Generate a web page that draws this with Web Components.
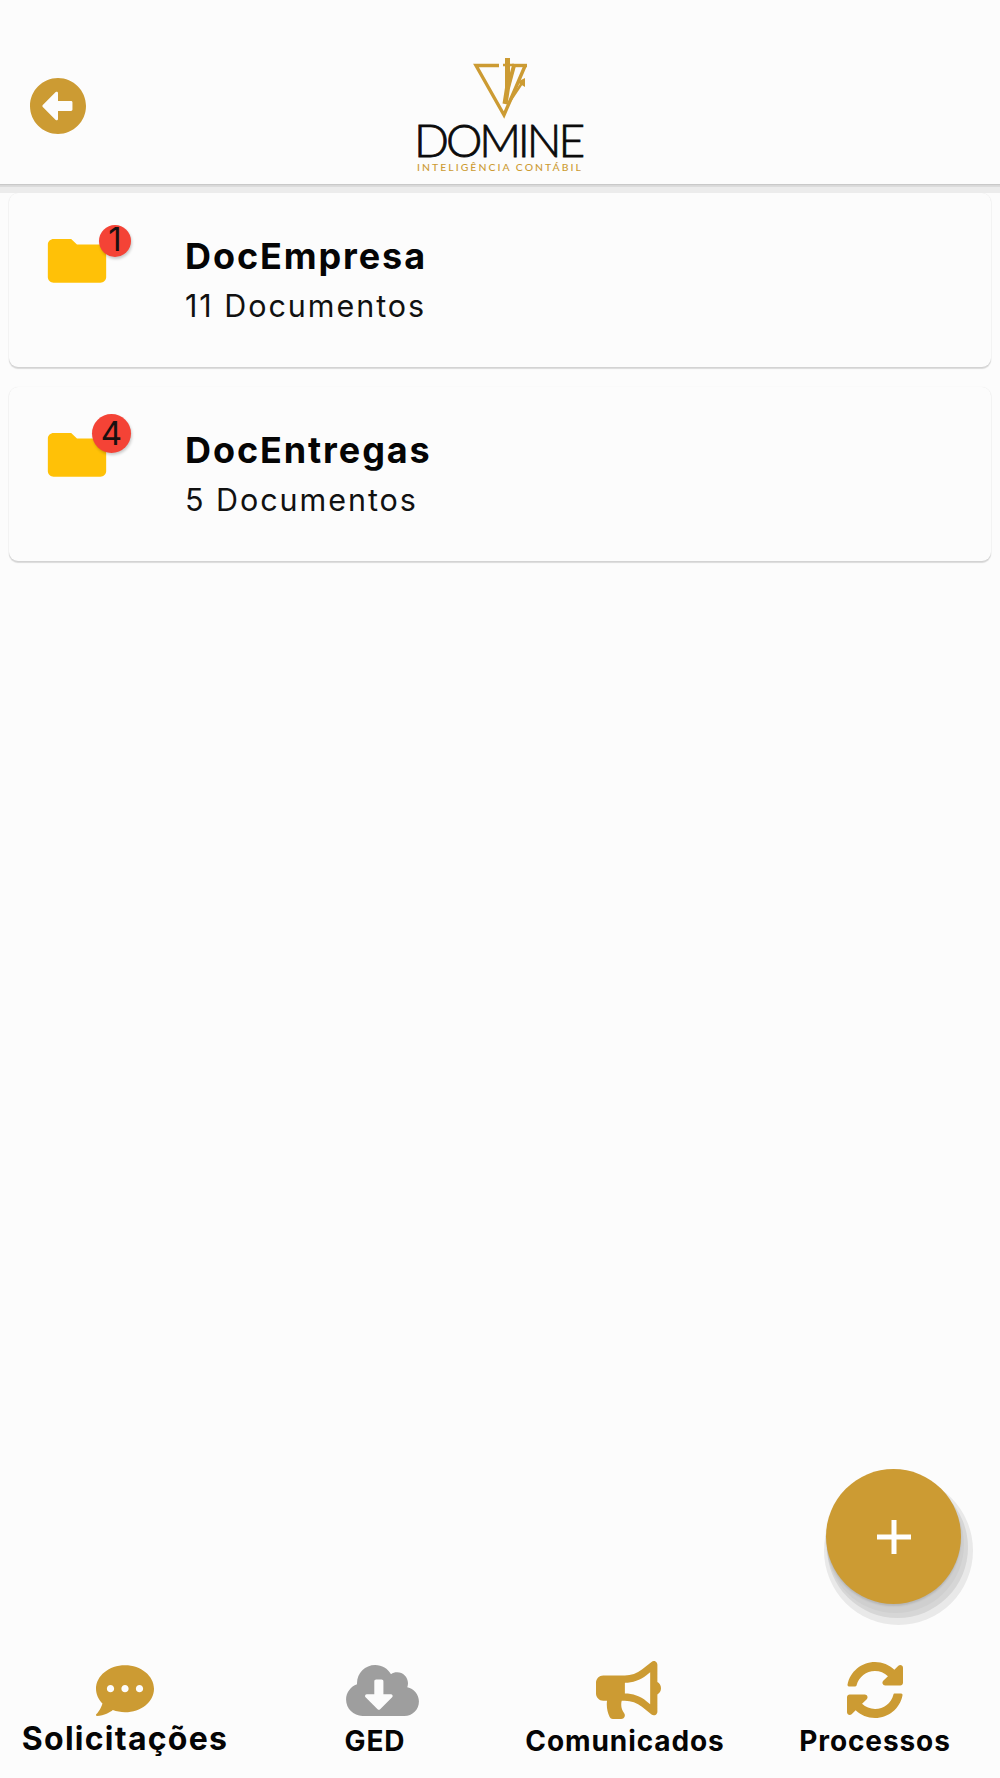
<!DOCTYPE html>
<html lang="pt"><head><meta charset="utf-8"><title>Domine</title>
<style>
html,body{margin:0;padding:0;background:#fcfcfc}
body{font-family:Inter,"Liberation Sans",sans-serif}
app-shell{display:flex;flex-direction:column;width:1000px;height:1778px;overflow:hidden}
</style></head><body>
<app-shell>
  <app-header slot="header"></app-header>
  <folder-card name="DocEmpresa" sub="11 Documentos" count="1"></folder-card>
  <folder-card name="DocEntregas" sub="5 Documentos" count="4" big></folder-card>
  <add-fab slot="fab"></add-fab>
  <nav-bar slot="nav">
    <nav-item label="Solicitações" icon="chat" active></nav-item>
    <nav-item label="GED" icon="cloud" muted dx="14"></nav-item>
    <nav-item label="Comunicados" icon="horn" dx="7"></nav-item>
    <nav-item label="Processos" icon="sync"></nav-item>
  </nav-bar>
</app-shell>
<script>
const GOLD='#cc9b33';
function def(name,html,init){customElements.define(name,class extends HTMLElement{
  constructor(){super();this.attachShadow({mode:'open'});}
  connectedCallback(){this.shadowRoot.innerHTML=typeof html==='function'?html(this):html;}
});}
def('app-shell',`<style>:host{display:flex;flex-direction:column;width:1000px;height:1778px;overflow:hidden;background:#fcfcfc;position:relative}
.list{flex:1;display:flex;flex-direction:column;gap:20px;padding:9px 9px 0}
.fabrow{display:flex;justify-content:flex-end;padding:0 39px 57px 0}</style>
<slot name="header"></slot>
<div class="list"><slot></slot></div>
<div class="fabrow"><slot name="fab"></slot></div>
<slot name="nav"></slot>`);
def('app-header',`<style>:host{display:block;height:184px;flex:none;background:#fcfcfc;position:relative;box-shadow:0 1px 1px #c9c9c9,0 3px 0 #dcdcdc,0 9px 0 #ececec;z-index:1}
.bar{height:100%;display:flex;align-items:flex-start;position:relative;justify-content:center}
.back{position:absolute;left:30px;top:78px;width:56px;height:56px;fill:${GOLD};display:block}
.logo{display:flex;flex-direction:column;align-items:center;padding-top:58px}
.mark{display:block;width:70px;height:62px}
.dom{font:300 46px/38px Lato,"Liberation Sans",sans-serif;color:#0b0b0b;letter-spacing:-3.1px;margin:1px 4px 0 0;-webkit-text-stroke:.8px #0b0b0b}
.tag{font:500 10.4px/13px Lato,"Liberation Sans",sans-serif;color:${GOLD};letter-spacing:2.05px;white-space:nowrap;margin-top:2px}
</style>
<div class="bar">
<svg class="back" viewBox="8 8 496 496"><path d="M256 504C119 504 8 393 8 256S119 8 256 8s248 111 248 248-111 248-248 248zm116-292H256v-70.9c0-10.7-13-16.1-20.5-8.5L121.2 247.5c-4.7 4.7-4.7 12.2 0 16.9l114.3 114.9c7.6 7.6 20.5 2.2 20.5-8.5V300h116c6.6 0 12-5.4 12-12v-64c0-6.6-5.4-12-12-12z"/></svg>
<div class="logo">
<svg class="mark" viewBox="465 58 70 62" fill="none" stroke="${GOLD}" stroke-width="3.4">
<path d="M499 65.5H476L504 115L525 66"/><path d="M512 65.5H527"/>
<path d="M507.5 58V88L505 104" stroke-width="5"/><path d="M503 65H514" stroke-width="2.5"/>
<path d="M514 65.5L508 88" stroke-width="4"/>
<path d="M508 104L522 83" stroke-width="2.6"/><path d="M517 82L525 78L525 87Z" fill="${GOLD}" stroke="none"/>
</svg>
<div class="dom">DOMINE</div>
<div class="tag">INTELIGÊNCIA CONTÁBIL</div>
</div></div>`);
def('folder-card',h=>{const big=h.hasAttribute('big');return `<style>:host{display:block;flex:none}
.card{height:174px;box-sizing:border-box;background:#fcfcfc;border-radius:9px;box-shadow:0 1px 1px #d2d2d2,0 2px 1px #dcdcdc,0 0 1px #e4e4e4;display:flex;align-items:flex-start;padding:34px 0 0 33px}
.ico{position:relative;width:70px;height:70px;flex:none;margin-right:73px}
svg{display:block;width:70px;height:65.6px;margin-top:1px;fill:#FFC107}
.badge{position:absolute;box-sizing:border-box;border-radius:50%;background:#F44336;box-shadow:1px 2px 3px rgba(0,0,0,.2);display:flex;align-items:center;justify-content:center;color:#1a1010;font-weight:400;line-height:1;
${big?'left:50px;top:-7px;width:39px;height:39px;font-size:33px':'left:57px;top:-2px;width:32px;height:32px;font-size:33px;padding-bottom:3px'}}
.t{font-weight:700;font-size:36px;line-height:44px;color:#050505;letter-spacing:1.9px;padding-top:7px}
.s{font-weight:400;font-size:30.5px;line-height:40px;color:#111;letter-spacing:1.95px;margin-top:8px}
</style><div class="card"><div class="ico"><svg viewBox="0 0 24 24" preserveAspectRatio="none"><path d="M10 4H4c-1.1 0-1.99.9-1.99 2L2 18c0 1.1.9 2 2 2h16c1.1 0 2-.9 2-2V8c0-1.1-.9-2-2-2h-8l-2-2z"/></svg><div class="badge">${h.getAttribute('count')}</div></div>
<div><div class="t">${h.getAttribute('name')}</div><div class="s">${h.getAttribute('sub')}</div></div></div>`});
def('add-fab',`<style>:host{display:block;width:135px;height:135px;flex:none}
.f{width:135px;height:135px;border-radius:50%;background:${GOLD};position:relative;display:flex;align-items:center;justify-content:center;
box-shadow:0 2px 2px rgba(0,0,0,.12),2px 8px 0 1px #cfcfcf,4px 11px 0 3px #d6d6d6,5px 14px 0 7px #e9e9e9}
svg{display:block;width:34px;height:34px;stroke:#fff;stroke-width:5;fill:none}
</style><div class="f"><svg viewBox="0 0 34 34"><path d="M0 17H34M17 0V34"/></svg></div>`);
def('nav-bar',`<style>:host{display:grid;grid-template-columns:repeat(4,250px);height:117px;flex:none;align-items:start}</style><slot></slot>`);
const ICONS={
chat:['0 32 512 448',58,51,'M256 32C114.6 32 0 125.1 0 240c0 49.6 21.4 95 57 130.7C44.5 421.1 2.7 466 2.2 466.5c-2.2 2.3-2.8 5.7-1.5 8.7S4.8 480 8 480c66.3 0 116-31.8 140.6-51.4 32.7 12.3 69 19.4 107.4 19.4 141.4 0 256-93.1 256-208S397.4 32 256 32zM128 272c-17.7 0-32-14.3-32-32s14.3-32 32-32 32 14.3 32 32-14.3 32-32 32zm128 0c-17.7 0-32-14.3-32-32s14.3-32 32-32 32 14.3 32 32-14.3 32-32 32zm128 0c-17.7 0-32-14.3-32-32s14.3-32 32-32 32 14.3 32 32-14.3 32-32 32z'],
cloud:['0 32 640 448',73,51,'M537.6 226.6c4.1-10.7 6.4-22.4 6.4-34.6 0-53-43-96-96-96-19.7 0-38.1 6-53.3 16.2C367 64.2 315.3 32 256 32c-88.4 0-160 71.6-160 160 0 2.7.1 5.4.2 8.1C40.2 219.8 0 273.2 0 336c0 79.5 64.5 144 144 144h368c70.7 0 128-57.3 128-128 0-61.9-44-113.6-102.4-125.4zm-132.9 88.7L299.3 420.7c-6.2 6.2-16.4 6.2-22.6 0L171.3 315.3c-10.1-10.1-2.9-27.3 11.3-27.3H248V176c0-8.8 7.2-16 16-16h48c8.8 0 16 7.2 16 16v112h65.4c14.2 0 21.4 17.2 11.3 27.3z'],
horn:['0 0 576 512',65,58,'M576 240c0-23.63-12.95-44.04-32-55.12V32.01C544 23.26 537.02 0 512 0c-7.12 0-14.19 2.38-19.98 7.02l-85.03 68.03C364.28 109.19 310.66 128 256 128H64c-35.35 0-64 28.65-64 64v96c0 35.35 28.65 64 64 64h33.7c-1.39 10.48-2.18 21.14-2.18 32 0 39.77 9.26 77.35 25.56 110.94 5.19 10.69 16.52 17.06 28.4 17.06h74.28c26.05 0 41.69-29.84 25.9-50.56-16.4-21.52-26.15-48.36-26.15-77.44 0-11.11 1.62-21.79 4.41-32H256c54.66 0 108.28 18.81 150.98 52.95l85.03 68.03a32.023 32.023 0 0 0 19.98 7.02c24.92 0 32-22.78 32-32V295.13C563.05 284.04 576 263.63 576 240zm-96 141.42l-33.05-26.44C392.95 311.78 325.12 288 256 288v-96c69.12 0 136.95-23.78 190.95-66.98L480 98.58v282.84z'],
sync:['8 8 496 496',56,56,'M370.72 133.28C339.458 104.008 298.888 87.962 255.848 88c-77.458.068-144.328 53.178-162.791 126.85-1.344 5.363-6.122 9.15-11.651 9.15H24.103c-7.498 0-13.194-6.807-11.807-14.176C33.933 94.924 134.813 8 256 8c66.448 0 126.791 26.136 171.315 68.685L463.03 40.97C478.149 25.851 504 36.559 504 57.941V192c0 13.255-10.745 24-24 24H345.941c-21.382 0-32.09-25.851-16.971-40.971l41.75-41.749zM32 296h134.059c21.382 0 32.09 25.851 16.971 40.971l-41.75 41.75c31.262 29.273 71.835 45.319 114.876 45.28 77.418-.07 144.315-53.144 162.787-126.849 1.344-5.363 6.122-9.15 11.651-9.15h57.304c7.498 0 13.194 6.807 11.807 14.176C478.067 417.076 377.187 504 256 504c-66.448 0-126.791-26.136-171.315-68.685L48.97 471.03C33.851 486.149 8 475.441 8 454.059V320c0-13.255 10.745-24 24-24z']};
def('nav-item',h=>{const [vb,w,ht,d]=ICONS[h.getAttribute('icon')];const a=h.hasAttribute('active'),m=h.hasAttribute('muted');const dx=h.getAttribute('dx')||0;
return `<style>:host{display:flex;flex-direction:column;align-items:center}
.i{height:58px;display:flex;align-items:center;justify-content:center;margin-left:${dx}px}
svg{display:block;fill:${m?'#9e9e9e':GOLD}}
.l{font-weight:700;color:#050505;white-space:nowrap;font-size:${a?'32px':'28px'};line-height:${a?'40px':'38px'};letter-spacing:${a?'1.25px':'.9px'};margin-top:${a?'0':'3px'}}
</style><div class="i"><svg width="${w}" height="${ht}" viewBox="${vb}"><path d="${d}"/></svg></div><div class="l">${h.getAttribute('label')}</div>`});
</script>
</body></html>
